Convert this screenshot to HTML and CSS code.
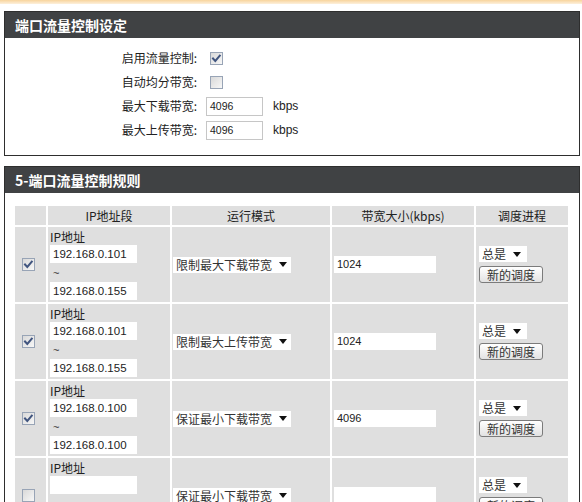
FILE: index.html
```html
<!DOCTYPE html>
<html lang="zh-CN">
<head>
<meta charset="utf-8">
<title>端口流量控制</title>
<link rel="stylesheet" href="styles.css">
</head>
<body>
<div class="topbar"></div>
<div class="page">
  <section class="panel">
    <div class="panel-head">端口流量控制设定</div>
    <div class="panel-body settings">
      <div class="setting">
        <span class="lbl">启用流量控制:</span>
        <span class="cb on cb-set"><svg viewBox="0 0 13 13" width="13" height="13"><polyline points="3,6.5 5.3,9 9.8,3.6" /></svg></span>
      </div>
      <div class="setting">
        <span class="lbl">自动均分带宽:</span>
        <span class="cb cb-set"></span>
      </div>
      <div class="setting">
        <span class="lbl">最大下载带宽:</span>
        <span class="txt txt-set">4096</span>
        <span class="unit">kbps</span>
      </div>
      <div class="setting">
        <span class="lbl">最大上传带宽:</span>
        <span class="txt txt-set">4096</span>
        <span class="unit">kbps</span>
      </div>
    </div>
  </section>

  <section class="panel">
    <div class="panel-head">5-端口流量控制规则</div>
    <div class="panel-body">
      <div class="rules">
        <div class="c th"></div>
        <div class="c th">IP地址段</div>
        <div class="c th">运行模式</div>
        <div class="c th">带宽大小(kbps)</div>
        <div class="c th">调度进程</div>

        <div class="c chk"><span class="cb on"><svg viewBox="0 0 13 13" width="13" height="13"><polyline points="3,6.5 5.3,9 9.8,3.6" /></svg></span></div>
        <div class="c ip"><div class="ip-lbl">IP地址</div><span class="txt ipin">192.168.0.101</span><div class="tilde">~</div><span class="txt ipin">192.168.0.155</span></div>
        <div class="c mode"><span class="sel sel-mode"><span class="sel-text">限制最大下载带宽</span><svg class="arrow" viewBox="0 0 8 5" width="8" height="5"><polygon points="0,0 8,0 4,5"/></svg></span></div>
        <div class="c bw"><span class="txt bwin">1024</span></div>
        <div class="c sched"><span class="sel sel-sched"><span class="sel-text">总是</span><svg class="arrow" viewBox="0 0 8 5" width="8" height="5"><polygon points="0,0 8,0 4,5"/></svg></span><button class="btn" type="button">新的调度</button></div>

        <div class="c chk"><span class="cb on"><svg viewBox="0 0 13 13" width="13" height="13"><polyline points="3,6.5 5.3,9 9.8,3.6" /></svg></span></div>
        <div class="c ip"><div class="ip-lbl">IP地址</div><span class="txt ipin">192.168.0.101</span><div class="tilde">~</div><span class="txt ipin">192.168.0.155</span></div>
        <div class="c mode"><span class="sel sel-mode"><span class="sel-text">限制最大上传带宽</span><svg class="arrow" viewBox="0 0 8 5" width="8" height="5"><polygon points="0,0 8,0 4,5"/></svg></span></div>
        <div class="c bw"><span class="txt bwin">1024</span></div>
        <div class="c sched"><span class="sel sel-sched"><span class="sel-text">总是</span><svg class="arrow" viewBox="0 0 8 5" width="8" height="5"><polygon points="0,0 8,0 4,5"/></svg></span><button class="btn" type="button">新的调度</button></div>

        <div class="c chk"><span class="cb on"><svg viewBox="0 0 13 13" width="13" height="13"><polyline points="3,6.5 5.3,9 9.8,3.6" /></svg></span></div>
        <div class="c ip"><div class="ip-lbl">IP地址</div><span class="txt ipin">192.168.0.100</span><div class="tilde">~</div><span class="txt ipin">192.168.0.100</span></div>
        <div class="c mode"><span class="sel sel-mode"><span class="sel-text">保证最小下载带宽</span><svg class="arrow" viewBox="0 0 8 5" width="8" height="5"><polygon points="0,0 8,0 4,5"/></svg></span></div>
        <div class="c bw"><span class="txt bwin">4096</span></div>
        <div class="c sched"><span class="sel sel-sched"><span class="sel-text">总是</span><svg class="arrow" viewBox="0 0 8 5" width="8" height="5"><polygon points="0,0 8,0 4,5"/></svg></span><button class="btn" type="button">新的调度</button></div>

        <div class="c chk"><span class="cb"></span></div>
        <div class="c ip"><div class="ip-lbl">IP地址</div><span class="txt ipin"></span><div class="tilde">~</div><span class="txt ipin"></span></div>
        <div class="c mode"><span class="sel sel-mode"><span class="sel-text">保证最小下载带宽</span><svg class="arrow" viewBox="0 0 8 5" width="8" height="5"><polygon points="0,0 8,0 4,5"/></svg></span></div>
        <div class="c bw"><span class="txt bwin"></span></div>
        <div class="c sched"><span class="sel sel-sched"><span class="sel-text">总是</span><svg class="arrow" viewBox="0 0 8 5" width="8" height="5"><polygon points="0,0 8,0 4,5"/></svg></span><button class="btn" type="button">新的调度</button></div>
      </div>
    </div>
  </section>
</div>
</body>
</html>
```

FILE: styles.css
```css
html, body {
  margin: 0;
  padding: 0;
  background: #fff;
  overflow: hidden;
}
body {
  width: 582px;
  font-family: "Noto Sans CJK SC", "Liberation Sans", sans-serif;
  font-size: 12px;
  color: #222;
}
.topbar {
  height: 4px;
  background: linear-gradient(#f8d49c, #fdf0dc);
}
.page {
  padding: 7px 2px 0 4px;
}
.panel {
  border: 1px solid #2e2e2e;
}
.panel + .panel {
  margin-top: 10px;
}
.panel-head {
  height: 26px;
  line-height: 26px;
  padding-left: 10px;
  background: #404244;
  color: #fff;
  font-weight: bold;
  font-size: 14px;
}
.settings {
  padding: 8px 0 13px;
}
.setting {
  display: flex;
  align-items: center;
  height: 24px;
}
.setting .lbl {
  box-sizing: border-box;
  width: 196px;
  padding-right: 4px;
  text-align: right;
  line-height: 16px;
  color: #222;
}
.cb {
  display: inline-block;
  box-sizing: border-box;
  width: 13px;
  height: 13px;
  border: 1px solid #98a4b6;
  background: linear-gradient(135deg, #d9d9d9, #f7f7f7);
  position: relative;
}
.cb svg {
  position: absolute;
  left: -1px;
  top: -1px;
  fill: none;
  stroke: #41557f;
  stroke-width: 2;
  stroke-linecap: square;
}
.cb-set {
  margin-left: 9px;
}
.txt {
  display: inline-block;
  box-sizing: border-box;
  background: #fff;
  font-family: "Liberation Sans", sans-serif;
  color: #222;
  white-space: nowrap;
}
.txt-set {
  margin-left: 5px;
  width: 57px;
  height: 19px;
  line-height: 17px;
  border: 1px solid #c6c6c6;
  padding-left: 3px;
  font-size: 10.5px;
}
.unit {
  margin-left: 10px;
  font-family: "Liberation Sans", sans-serif;
  font-size: 12px;
  color: #222;
}
.rules {
  margin: 11px 0 0 8px;
  display: grid;
  grid-template-columns: 31px 122px 158px 142px 92px;
  grid-template-rows: 19px;
  grid-auto-rows: 75px;
  gap: 2px;
  padding: 2px;
  width: max-content;
  background: #fff;
}
.c {
  background: #dfdfdf;
  box-sizing: border-box;
}
.th {
  line-height: 19px;
  text-align: center;
  color: #222;
}
.chk {
  display: flex;
  align-items: center;
  padding-left: 7px;
}
.ip {
  padding: 2px 0 0 2px;
}
.ip-lbl {
  height: 16px;
  line-height: 16px;
}
.ipin {
  display: block;
  width: 87px;
  height: 18px;
  line-height: 18px;
  padding-left: 3px;
  font-size: 11.5px;
}
.tilde {
  height: 19px;
  line-height: 21px;
  padding-left: 3px;
  font-family: "Liberation Sans", sans-serif;
  font-size: 11px;
  color: #333;
}
.mode {
  display: flex;
  align-items: center;
  padding-left: 1px;
}
.sel {
  display: inline-flex;
  align-items: center;
  justify-content: space-between;
  box-sizing: border-box;
  height: 16px;
  background: #fff;
  padding: 0 4px 0 3px;
}
.sel-text {
  line-height: 16px;
  color: #333;
  white-space: nowrap;
}
.arrow {
  fill: #111;
  flex: none;
}
.sel-mode {
  width: 118px;
}
.sel-sched {
  width: 48px;
  padding-right: 6px;
}
.bw {
  display: flex;
  align-items: center;
  padding-left: 2px;
}
.bwin {
  width: 102px;
  height: 17px;
  line-height: 17px;
  padding-left: 3px;
  font-size: 11px;
}
.sched {
  display: flex;
  flex-direction: column;
  justify-content: center;
  align-items: flex-start;
  padding-left: 3px;
}
.btn {
  margin-top: 4px;
  box-sizing: border-box;
  width: 64px;
  height: 17px;
  padding: 0;
  border: 1px solid #7b7b7b;
  border-radius: 3px;
  background: linear-gradient(#ffffff, #e2e2e2);
  font-family: "Noto Sans CJK SC", sans-serif;
  font-size: 12px;
  line-height: 14px;
  color: #333;
}
```
